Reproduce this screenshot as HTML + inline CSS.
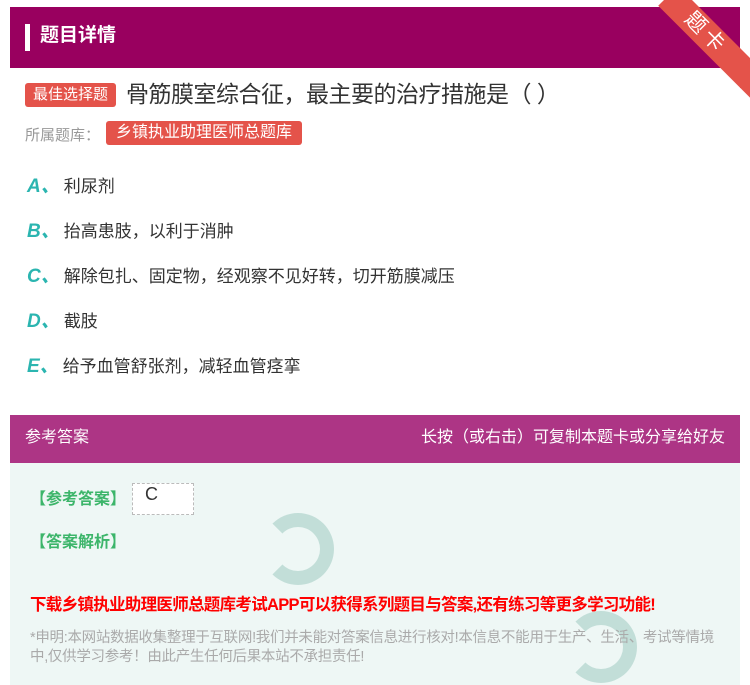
<!DOCTYPE html>
<html><head><meta charset="utf-8"><style>
*{margin:0;padding:0;box-sizing:border-box}
body{width:750px;height:685px;background:#fff;font-family:"Liberation Sans","Noto Sans CJK SC",sans-serif;position:relative;overflow:hidden}
.hd{position:absolute;left:10px;top:7px;width:730px;height:61px;background:#99005f}
.hd .bar{position:absolute;left:15px;top:17px;width:5px;height:27px;background:#fff}
.hd .t{position:absolute;left:30px;top:15px;color:#fff;font-size:19px;font-weight:bold;line-height:28px}
.rib{position:absolute;width:130px;height:28px;background:#e4534a;transform:rotate(45deg);transform-origin:0 0;left:678px;top:-14px}
.rib span{position:absolute;left:28px;top:0;color:#fff;font-size:21px;line-height:28px;letter-spacing:4px}
.fold{position:absolute;left:740px;top:66px;width:10px;height:22px;background:#b8362e}
.q{position:absolute;left:25px;top:78px;font-size:23px;color:#333;line-height:32px;letter-spacing:-0.5px}
.tag{display:inline-block;background:#e4534a;color:#fff;font-size:15px;line-height:24px;padding:0 8px;border-radius:3px;vertical-align:3px;margin-right:10px;letter-spacing:0}
.lib{position:absolute;left:25px;top:121px;font-size:15px;color:#999;line-height:22px}
.lib .tag{margin-left:6px;padding:0 10px;font-size:16px;line-height:24px}
.opt{position:absolute;left:27px;font-size:17px;color:#333;line-height:24px}
.opt b{color:#2bb5b0;font-style:italic;font-size:19px;margin-right:4px}
.ah{position:absolute;left:10px;top:415px;width:730px;height:48px;background:#ad3585;color:#fff;font-size:16px;line-height:46px}
.ab{position:absolute;left:10px;top:463px;width:730px;height:222px;background:#eef7f5;overflow:hidden}
.g{color:#3cb56a;font-weight:bold;font-size:16px;position:absolute}
.red{position:absolute;left:20px;top:128px;color:#f00;font-size:16.5px;font-weight:bold;letter-spacing:-0.7px;white-space:nowrap}
.note{position:absolute;left:20px;top:166px;width:690px;color:#aaa;font-size:14.5px;line-height:19px;letter-spacing:-0.3px}
.swirl{position:absolute;border-radius:50%;border:14px solid #b8d9d2;border-left-color:transparent;opacity:.8}
</style></head><body>
<div class="hd"><div class="bar"></div><div class="t">题目详情</div></div>
<div class="fold"></div>
<div class="rib"><span>题卡</span></div>
<div class="q"><span class="tag">最佳选择题</span>骨筋膜室综合征，最主要的治疗措施是（ ）</div>
<div class="lib">所属题库：<span class="tag">乡镇执业助理医师总题库</span></div>
<div class="opt" style="top:175px"><b>A、</b>利尿剂</div>
<div class="opt" style="top:220px"><b>B、</b>抬高患肢，以利于消肿</div>
<div class="opt" style="top:265px"><b>C、</b>解除包扎、固定物，经观察不见好转，切开筋膜减压</div>
<div class="opt" style="top:310px"><b>D、</b>截肢</div>
<div class="opt" style="top:355px"><b>E、</b>给予血管舒张剂，减轻血管痉挛</div>
<div class="ah"><span style="margin-left:15px">参考答案</span><span style="position:absolute;right:15px">长按（或右击）可复制本题卡或分享给好友</span></div>
<div class="ab">
<div class="swirl" style="left:252px;top:50px;width:72px;height:72px"></div>
<div class="swirl" style="left:555px;top:148px;width:72px;height:72px"></div>
<div class="g" style="left:20px;top:22px">【参考答案】</div>
<div style="position:absolute;left:122px;top:20px;width:62px;height:32px;background:#fff;border:1px dashed #bbb;font-size:18px;padding-left:12px;color:#333">C</div>
<div class="g" style="left:20px;top:65px">【答案解析】</div>
<div class="red">下载乡镇执业助理医师总题库考试APP可以获得系列题目与答案,还有练习等更多学习功能!</div>
<div class="note">*申明:本网站数据收集整理于互联网!我们并未能对答案信息进行核对!本信息不能用于生产、生活、考试等情境中,仅供学习参考！由此产生任何后果本站不承担责任!</div>
</div>
</body></html>
